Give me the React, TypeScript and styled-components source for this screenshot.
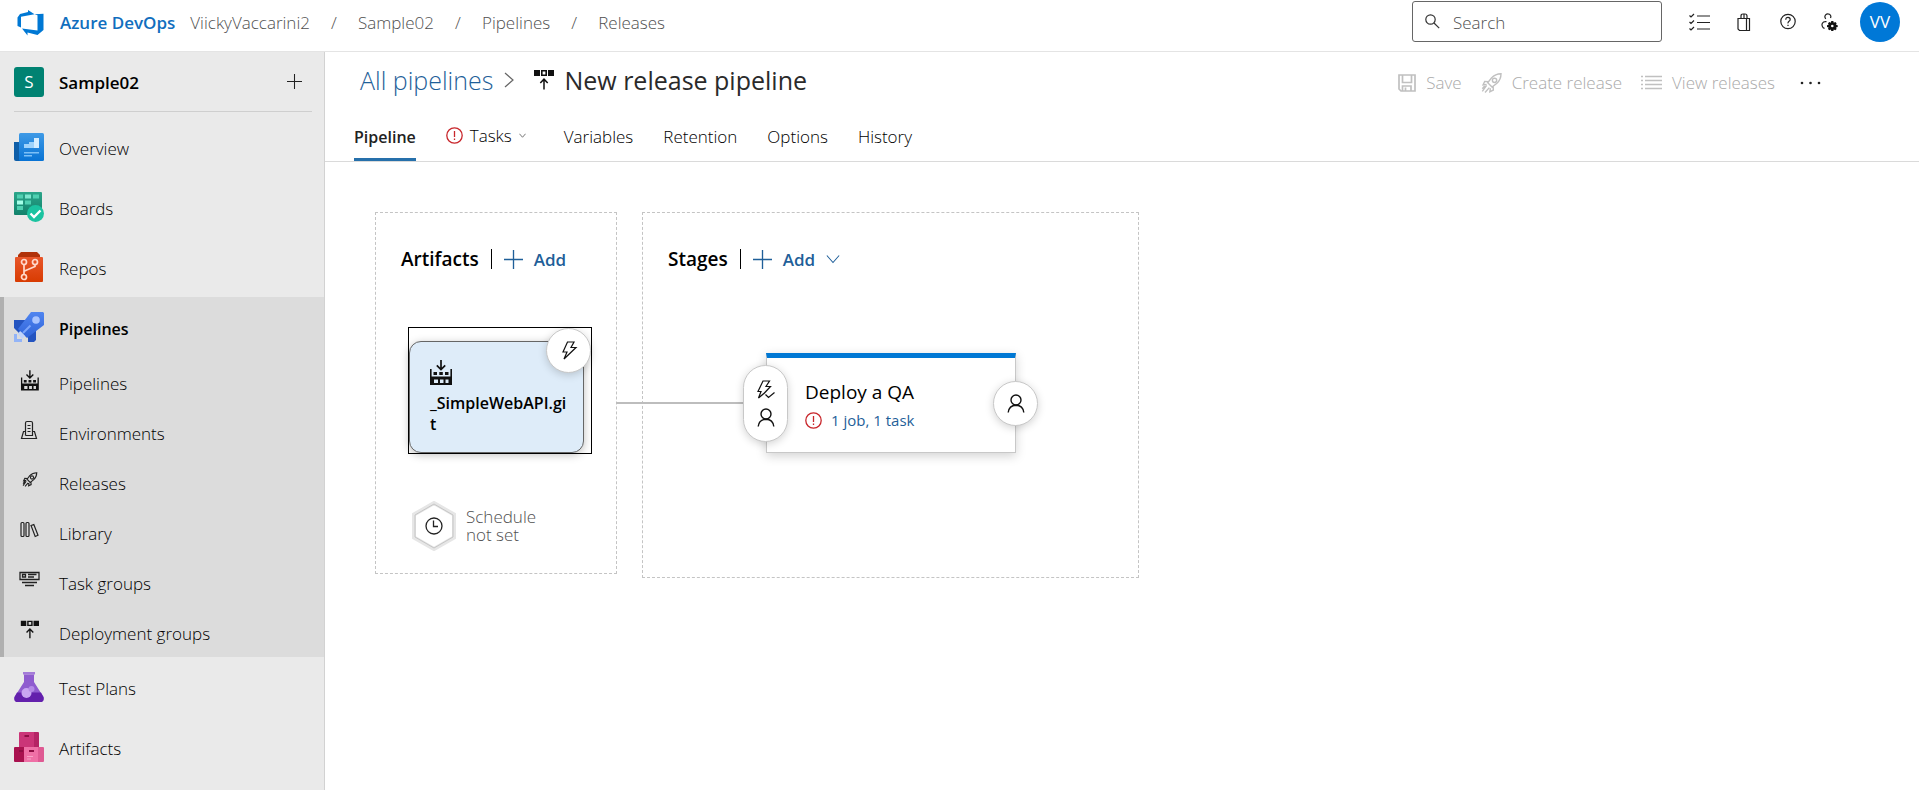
import React from "react";
import styled, { createGlobalStyle, css } from "styled-components";

const font = `"Open Sans", "Noto Sans", sans-serif`;
const link = "#1f5f99";

const GlobalStyle = createGlobalStyle`
  * { box-sizing: border-box; }
  body { margin: 0; background: #fff; color: #000; font-family: ${font}; font-size: 17px; font-weight: 300; }
  a { color: inherit; text-decoration: none; }
  button { border: 0; padding: 0; background: none; font: inherit; color: inherit; cursor: pointer; }
  h1, h2, h3, p, ul { margin: 0; padding: 0; }
  ul { list-style: none; }
  svg { display: block; flex: none; }
`;

const Page = styled.div`
  min-height: 100vh;
  display: flex;
  flex-direction: column;
`;

const TopBar = styled.header`
  display: flex;
  align-items: flex-start;
  justify-content: space-between;
  height: 52px;
  padding: 1px 19px 0 17px;
  border-bottom: 1px solid #e4e4e4;
`;

const Crumbs = styled.nav`
  display: flex;
  align-items: center;
  height: 43px;
  color: #505050;
`;

const Brand = styled.a`
  display: flex;
  align-items: center;
  gap: 16px;
  margin-right: 15px;
  color: #106ebe;
  font-weight: 600;
`;

const Slash = styled.span`
  width: 48px;
  text-align: center;
`;

const TopTools = styled.div`
  display: flex;
  align-items: center;
`;

const SearchBox = styled.label`
  display: flex;
  align-items: center;
  gap: 13px;
  width: 250px;
  height: 41px;
  margin-right: 27px;
  padding: 0 12px;
  border: 1px solid #666;
  border-radius: 3px;
`;

const SearchInput = styled.input`
  width: 100%;
  min-width: 0;
  padding: 2px 0 0;
  border: 0;
  outline: 0;
  background: none;
  font: inherit;
  &::placeholder { color: #505050; opacity: 1; }
`;

const ToolIcons = styled.div`
  display: flex;
  align-items: center;
  gap: 21px;
  margin-right: 22px;
`;

const Avatar = styled.button`
  width: 40px;
  height: 40px;
  border-radius: 50%;
  background: #0078d7;
  color: #fff;
  font-weight: 400;
`;

const Body = styled.div`
  display: flex;
  flex: 1;
`;

const Sidebar = styled.aside`
  flex: none;
  width: 325px;
  background: #eaeaea;
  border-right: 1px solid #d2d2d2;
`;

const Project = styled.div`
  display: flex;
  align-items: center;
  height: 60px;
  margin: 0 12px 5px 14px;
  border-bottom: 1px solid #cfcfcf;
`;

const ProjectTile = styled.span`
  width: 30px;
  height: 30px;
  margin-right: 15px;
  border-radius: 3px;
  background: #008272;
  color: #fff;
  font-weight: 400;
  line-height: 30px;
  text-align: center;
`;

const ProjectName = styled.a`
  flex: 1;
  padding-top: 2px;
  font-weight: 600;
`;

const AddButton = styled.button`
  margin-right: 10px;
`;

const NavGroup = styled.ul<{ $active?: boolean }>`
  ${(p) => p.$active && css`
    background: #dcdcdc;
    box-shadow: inset 4px 0 #b0b0b0;
  `}
`;

const NavItem = styled.a<{ $sub?: boolean; $bold?: boolean }>`
  display: flex;
  align-items: center;
  gap: 15px;
  height: ${(p) => (p.$sub ? 50 : 60)}px;
  padding-left: 14px;
  ${(p) => p.$bold && css`
    font-size: 16px;
    font-weight: 600;
  `}
  span { padding-top: 3px; }
`;

const Main = styled.main`
  flex: 1;
  min-width: 0;
`;

const TitleRow = styled.div`
  display: flex;
  align-items: center;
  justify-content: space-between;
  height: 58px;
  padding: 0 98px 0 35px;
`;

const Title = styled.div`
  display: flex;
  align-items: center;
  padding-bottom: 3px;
  font-size: 25px;
  line-height: 34px;
`;

const TitleLink = styled.a`
  margin-right: 8px;
  color: ${link};
`;

const TitleIcon = styled.span`
  margin: 0 10px 0 17px;
`;

const Heading = styled.h1`
  color: #2a2a2a;
  font-size: 25px;
  font-weight: 400;
`;

const Actions = styled.div`
  display: flex;
  align-items: center;
  gap: 19px;
  padding-top: 3px;
`;

const Action = styled.button`
  display: flex;
  align-items: center;
  gap: 10px;
  color: #222;
  &:disabled { color: #aaa; cursor: default; }
  &:disabled svg { color: #c0c0c0; }
`;

const MoreAction = styled(Action)`
  margin-left: 6px;
`;

const Tabs = styled.nav`
  display: flex;
  gap: 30px;
  height: 52px;
  padding-left: 29px;
  border-bottom: 1px solid #dadada;
`;

const Tab = styled.a<{ $active?: boolean }>`
  display: flex;
  align-items: center;
  gap: 7px;
  padding-top: 5px;
  border-bottom: 3px solid ${(p) => (p.$active ? "#2670ab" : "transparent")};
  ${(p) => p.$active && css`
    color: #222;
    font-size: 16px;
    font-weight: 600;
  `}
`;

const MenuTab = styled(Tab)`
  margin-right: 8px;
  padding-top: 2px;
`;

const Canvas = styled.div`
  display: flex;
  align-items: flex-start;
  gap: 25px;
  padding: 50px;
`;

const Panel = styled.section<{ $width: number; $height: number }>`
  position: relative;
  width: ${(p) => p.$width}px;
  min-height: ${(p) => p.$height}px;
  padding: 36px 25px 22px;
  border: 1px dashed #c4c4c4;
`;

const PanelHead = styled.div`
  display: flex;
  align-items: center;
  height: 20px;
`;

const PanelTitle = styled.h2`
  padding-right: 12px;
  font-size: 19px;
  font-weight: 600;
`;

const AddLink = styled.button`
  display: flex;
  align-items: center;
  gap: 11px;
  height: 20px;
  padding-left: 12px;
  border-left: 1px solid #000;
  color: ${link};
  font-size: 17px;
  font-weight: 600;
`;

const Selection = styled.div`
  position: relative;
  width: 184px;
  margin: 58px 0 0 7px;
  padding: 13px 7px 0 0;
  border: 1px solid #000;
`;

const ArtifactCard = styled.div`
  height: 112px;
  padding: 18px 14px 0 20px;
  border: 1px solid #666;
  border-radius: 12px;
  background: #deecf9;
  box-shadow: 0 2px 8px rgba(0, 0, 0, 0.25);
`;

const ArtifactName = styled.h3`
  margin-top: 8px;
  font-size: 16px;
  font-weight: 600;
  line-height: 21px;
  word-break: break-all;
`;

const Round = styled.button<{ $tall?: boolean }>`
  position: absolute;
  display: flex;
  flex-direction: column;
  align-items: center;
  justify-content: center;
  gap: 9px;
  width: 45px;
  height: ${(p) => (p.$tall ? 77 : 45)}px;
  border: 1px solid #c8c8c8;
  border-radius: 23px;
  background: #fff;
  box-shadow: 0 2px 8px rgba(0, 0, 0, 0.18);
`;

const TriggerRound = styled(Round)`
  top: 0;
  right: 0;
`;

const PreRound = styled(Round)`
  left: -24px;
  top: 7px;
`;

const PostRound = styled(Round)`
  right: -23px;
  top: 23px;
`;

const Schedule = styled.button`
  display: flex;
  align-items: center;
  gap: 10px;
  margin: 47px 0 0 11px;
  color: #505050;
  font-size: 17px;
  line-height: 18px;
  text-align: left;
`;

const ScheduleText = styled.span`
  width: 76px;
`;

const Connector = styled.span`
  position: absolute;
  z-index: 1;
  left: 100%;
  top: 189px;
  width: 128px;
  height: 2px;
  background: #bdbdbd;
`;

const StageCard = styled.div`
  position: relative;
  z-index: 2;
  width: 250px;
  height: 100px;
  margin: 84px 0 0 98px;
  padding: 21px 38px 0;
  border: 1px solid #c8c8c8;
  border-top: 5px solid #0078d4;
  background: #fff;
  box-shadow: 0 3px 10px rgba(0, 0, 0, 0.18);
`;

const StageName = styled.h3`
  font-size: 19px;
  font-weight: 400;
  line-height: 26px;
`;

const StageLink = styled.a`
  display: flex;
  align-items: center;
  gap: 9px;
  margin-top: 3px;
  color: ${link};
  font-size: 15px;
  font-weight: 400;
  line-height: 24px;
`;

const AzureLogo = () => (
  <svg width="27" height="26" viewBox="0 0 27 26" fill="#0078d4">
    <path d="M.5 7.500 3 4 11 2V0L17.500 4.300 4 6.800V17.500L.5 16Z" />
    <path d="M17.500 4.300 26.500 3.700V20L20.500 25 10.500 22.500V25.500L5 18.500 20.500 20.500V5.200Z" />
  </svg>
);

const Plus = ({ size = 15, color = "#222" }: { size?: number; color?: string }) => (
  <svg width={size} height={size} viewBox="0 0 20 20" fill="none" stroke={color} strokeWidth="1.400">
    <path d="M10 0V20M0 10H20" />
  </svg>
);

const Chevron = ({ size, color = "#666", right }: { size: number; color?: string; right?: boolean }) => (
  <svg width={size} height={size} viewBox="0 0 16 16" fill="none" stroke={color} strokeWidth={size < 10 ? 2 : 1.2}>
    <path d={right ? "M4 1 12 8 4 15" : "M1 4 8 12 15 4"} />
  </svg>
);

const Alert = () => (
  <svg width="17" height="17" viewBox="0 0 17 17" fill="none" stroke="#c8262b" strokeWidth="1.300">
    <circle cx="8.500" cy="8.500" r="7.700" />
    <path d="M8.500 4V10M8.500 11.400V12.900" />
  </svg>
);

const SearchIcon = () => (
  <svg width="15" height="15" viewBox="0 0 15 15" fill="none" stroke="#333" strokeWidth="1.200">
    <circle cx="5.500" cy="5.500" r="4.700" />
    <path d="M9 9 14.200 14.200" />
  </svg>
);

const Checklist = () => (
  <svg width="21" height="18" viewBox="0 0 21 18" fill="none" stroke="#222" strokeWidth="1.200">
    <path d="M8 3H21M8 9.500H21M8 16H21M.5 2.500 2 4 5 1M.5 9 2 10.500 5 7.500M.5 15.500 2 17 5 14" />
  </svg>
);

const Bag = () => (
  <svg width="24" height="20" viewBox="0 0 24 20" fill="none" stroke="#222" strokeWidth="1.200">
    <path d="M7 6.500H18.500V18.500H8.500L7 17ZM15.500 6.500V18.500M10 6.500V4Q10 2 12 2H14Q16 2 16 4V6.500M13 2V6.500" />
  </svg>
);

const Help = () => (
  <svg width="24" height="17" viewBox="0 0 24 17" fill="none" stroke="#222" strokeWidth="1.200">
    <circle cx="12" cy="8.500" r="7.200" />
    <path d="M9.800 6.700Q9.800 4.300 12 4.300T14.200 6.400Q14.200 7.500 13 8.300T12 10.300M12 11.700V13" />
  </svg>
);

const UserGear = () => (
  <svg width="17" height="18" viewBox="0 0 17 18">
    <g fill="none" stroke="#222" strokeWidth="1.200">
      <path d="M4.800 5.800A2.900 2.900 0 1 1 9.500 5M5.500 8.700Q2.500 8.200 1.400 10.200T2 14.500L3.500 15.500" />
    </g>
    <path fill="#111" d="M10.300 8H12.300L12.800 9.700 14.300 8.900 15.600 10.200 15 11.700 16.700 12.200V14L15 14.400 15.600 16 14.300 17.200 12.800 16.400 12.300 18H10.300L9.800 16.400 8.300 17.200 7 16 7.600 14.400 6 14V12.200L7.600 11.700 7 10.200 8.300 8.900 9.800 9.700Z" />
    <circle cx="11.300" cy="13" r="1.300" fill="#fff" />
  </svg>
);

const OverviewIcon = () => (
  <svg width="30" height="30" viewBox="0 0 30 30">
    <defs>
      <linearGradient id="ov" x1="0" y1="0" x2="0" y2="1">
        <stop stopColor="#3f9ae6" /><stop offset="1" stopColor="#0873d4" />
      </linearGradient>
    </defs>
    <path fill="#0e5ea8" d="M0 10H7V29H2Q0 29 0 27Z" />
    <rect x="5" y="1" width="25" height="28" rx="1.500" fill="url(#ov)" />
    <path fill="#9fd3fb" d="M10 12H15V10H20V6H25V16H10Z" />
    <path fill="#d5edff" d="M20 6H25V16H20Z" />
    <path fill="#7cc0f7" d="M10 20H25V21.500H10ZM10 23H18V24.500H10Z" />
  </svg>
);

const BoardsIcon = () => (
  <svg width="30" height="30" viewBox="0 0 30 30">
    <defs>
      <linearGradient id="bd" x1="0" y1="0" x2="0" y2="1">
        <stop stopColor="#2ba58a" /><stop offset="1" stopColor="#12826b" />
      </linearGradient>
    </defs>
    <rect width="28" height="23" rx="1" fill="url(#bd)" />
    <path fill="#4fd0b1" d="M3 2.500H9V6.500H3ZM19 2.500H25V6.500H19ZM3 14H9V18H3ZM11 8.500H17V12.500H11Z" />
    <path fill="#7de6cf" d="M11 2.500H17V6.500H11Z" />
    <path fill="#a5ffe9" d="M3 8.500H9V12.500H3Z" />
    <circle cx="21.500" cy="21.500" r="8.500" fill="#1bc3a0" />
    <path d="M16.500 21.500 20 25 26.500 18.500" fill="none" stroke="#fff" strokeWidth="2.400" />
  </svg>
);

const ReposIcon = () => (
  <svg width="30" height="30" viewBox="0 0 30 30">
    <defs>
      <linearGradient id="rp" x1="0" y1="0" x2="0" y2="1">
        <stop stopColor="#e8572b" /><stop offset="1" stopColor="#d83b01" />
      </linearGradient>
    </defs>
    <path fill="#b0320a" d="M7 0H23L26 3V7H4V3Z" />
    <rect x="1" y="5" width="28" height="25" rx="1" fill="url(#rp)" />
    <g fill="none" stroke="#ffd9cb" strokeWidth="1.700">
      <circle cx="10" cy="10" r="2.500" /><circle cx="21" cy="10" r="2.500" /><circle cx="10" cy="25" r="2.500" />
      <path d="M10 12.500V22.500M21 12.500V14.500L10.500 19" />
    </g>
  </svg>
);

const PipelinesIcon = () => (
  <svg width="30" height="30" viewBox="0 0 30 30">
    <defs>
      <linearGradient id="pl" x1="0" y1="0" x2="0" y2="1">
        <stop stopColor="#5085f0" /><stop offset="1" stopColor="#2f63d8" />
      </linearGradient>
    </defs>
    <path fill="#2454c0" d="M0 8H13V13L5 21 0 16ZM14 24 22 17V28L20 30H14Z" />
    <path fill="url(#pl)" d="M17 0H29L30 1V13L13 26 4 17Z" />
    <circle cx="22" cy="8" r="3.800" fill="#a9c4ff" />
    <path d="M16.500 13.500 9 21" stroke="#7ba5fb" strokeWidth="2" />
    <path fill="#c0d3fb" d="M6 19 11 24 8 27 4 22Z" />
    <path fill="#93b4f7" d="M0 22H3V27H8V30H0Z" />
  </svg>
);

const TestPlansIcon = () => (
  <svg width="30" height="30" viewBox="0 0 30 30">
    <path fill="#a47bd8" d="M9 0H21V2.500H9Z" />
    <path fill="#8f5ccf" d="M10 2.500H20V10L29.500 25Q30.500 30 26 30H4Q-.5 30 .5 25L10 10Z" />
    <path fill="#6320ac" d="M3 20.500H27L29.500 25Q30.500 30 26 30H4Q-.5 30 .5 25Z" />
    <circle cx="12.500" cy="21" r="5" fill="#c9a6f2" /><circle cx="17.500" cy="17" r="3" fill="#b48ae6" />
  </svg>
);

const ArtifactsIcon = () => (
  <svg width="30" height="30" viewBox="0 0 30 30">
    <path fill="#cb3578" d="M5 1Q5 0 6 0H20V15H5Z" />
    <path fill="#b52465" d="M20 0H24Q25 0 25 1V15H20Z" />
    <path fill="#a9124f" d="M0 16Q0 15 1 15H10V30H1Q0 30 0 29Z" />
    <path fill="#ef70a6" d="M10 15H26V30H10Z" />
    <path fill="#df5a93" d="M24 15H29Q30 15 30 16V29Q30 30 29 30H24Z" />
    <path fill="#8f0e44" d="M10.500 3H15V5H10.500ZM5 18H9V20H5ZM15 18H20V20H15Z" />
    <path fill="#f7a3c6" d="M13 24H19V25H13ZM13 26.500H17V27.500H13Z" />
  </svg>
);

const BuildGlyph = ({ small }: { small?: boolean }) => (
  <svg width={small ? 30 : 22} height={small ? 30 : 25} viewBox={small ? "-8.600 -4 37 37" : "0 0 22 25"}>
    <path d="M11 0V9M6.800 5.300 11 9.500 15.200 5.300" fill="none" stroke="#111" strokeWidth="1.700" />
    <path fill="#111" fillRule="evenodd" d="M0 9H1.600V16.500H20.400V9H22V25H0ZM4 19.500V23H8V19.500ZM10 19.500V23H13.500V19.500ZM15.500 19.500V23H18.500V19.500ZM3.500 12H7V15H3.500ZM9.300 12H12.800V15H9.300ZM15 12H18.500V15H15Z" />
  </svg>
);

const EnvIcon = () => (
  <svg width="30" height="30" viewBox="0 0 30 30" fill="none" stroke="#222" strokeWidth="1.200">
    <path d="M11.500 18.500V6Q11.500 4.500 13 4.500H17Q18.500 4.500 18.500 6V18.500H11.500M11.500 14.500H9.500L7.500 21.500H22.500L20.500 14.500H18.500M13.500 8.500H16.500M13.500 11.500H16.500M13.500 14.500H16.500" />
  </svg>
);

const RocketShape = () => (
  <>
    <path d="M6 9 9.500 4.500Q13 .8 18.300 .7 18.300 6 14.500 9.500L10 13ZM6.800 8 3.200 7.800 1.700 11 5 10.500M11 12.200 11.200 15.800 8 17.300 8.500 14M5 11.500 1 17M7.500 13.500 3.500 18M3.500 11.500 1 14.500" />
    <circle cx="12.300" cy="6.800" r="2" />
  </>
);

const ReleaseIcon = () => (
  <svg width="30" height="30" viewBox="-10.500 -6.500 38 38" fill="none" stroke="#222" strokeWidth="1.400">
    <RocketShape />
  </svg>
);

const LibraryIcon = () => (
  <svg width="30" height="30" viewBox="0 0 30 30" fill="none" stroke="#222" strokeWidth="1.200">
    <rect x="7" y="5.500" width="3" height="14" rx="1" />
    <rect x="12" y="5.500" width="3" height="14" rx="1" />
    <path d="M17 8.500 19.800 7.600 24 18.300 21.200 19.500Z" />
  </svg>
);

const TaskGroupIcon = () => (
  <svg width="30" height="30" viewBox="0 0 30 30" fill="none" stroke="#222" strokeWidth="1.300">
    <path d="M6 5.500H25V12.500H6ZM8.500 7.500H11.500V10H8.500ZM14 7.500H22.500M14 10H20M8 15.500H23M11 18.500H20" />
  </svg>
);

const DeployIcon = ({ small }: { small?: boolean }) => (
  <svg width={small ? 30 : 20} height={small ? 30 : 20} viewBox={small ? "-7.500 -4 33 33" : "0 0 20 20"}>
    <path fill="#111" fillRule="evenodd" d="M0 0H6V6H0ZM14 0H20V6H14ZM7 0H13V6H7ZM8.600 1.600V4.400H11.400V1.600Z" />
    <path fill="none" stroke="#111" strokeWidth="1.500" d="M10 19.500V9.500M6.300 13 10 9.200 13.700 13" />
  </svg>
);

const SaveIcon = () => (
  <svg width="18" height="18" viewBox="0 0 18 18" fill="none" stroke="currentColor" strokeWidth="1.700">
    <path d="M1 1H17V17H3L1 15ZM4.500 1V8.500H13.500V1M4.500 17V12H13V17M7.500 13.500V17" />
  </svg>
);

const RocketAction = () => (
  <svg width="21" height="20" viewBox="0 0 19 18.500" fill="none" stroke="currentColor" strokeWidth="1.300">
    <RocketShape />
  </svg>
);

const ListIcon = () => (
  <svg width="21" height="15" viewBox="0 0 21 15" fill="none" stroke="currentColor" strokeWidth="1.300">
    <path d="M4 1.500H21M4 5.500H21M4 9.500H21M4 13.500H21M0 1.500H2M0 5.500H2M0 9.500H2M0 13.500H2" />
  </svg>
);

const Dots = () => (
  <svg width="21" height="4" viewBox="0 0 21 4" fill="#222">
    <circle cx="2" cy="2" r="1.300" /><circle cx="10.500" cy="2" r="1.300" /><circle cx="19" cy="2" r="1.300" />
  </svg>
);

const Bolt = ({ check }: { check?: boolean }) => (
  <svg width="18" height="19" viewBox="0 0 18 19" fill="none" stroke="#111" strokeWidth="1.200">
    {check ? (
      <path d="M8 12.500 1.500 18 4 11.500H1L6 1H12.500L9 6.500H13.500L6.500 14M8.500 14.500 11.500 17.500 17.500 12.500" />
    ) : (
      <path d="M7.500 1H14L11 6.500H16L4 18 7 11H3Z" />
    )}
  </svg>
);

const Person = () => (
  <svg width="18" height="19" viewBox="0 0 18 19" fill="none" stroke="#111" strokeWidth="1.400">
    <circle cx="9" cy="6" r="5" />
    <path d="M1.200 18.500Q2 11.500 9 11.300 16 11.500 16.800 18.500" />
  </svg>
);

const ClockHex = () => (
  <svg width="44" height="50" viewBox="0 0 44 50" fill="none">
    <path d="M22 2 42 13.500V36.500L22 48 2 36.500V13.500Z" fill="#fff" stroke="#e6e6e6" strokeWidth="4" />
    <path d="M22 3 41 14V36L22 47 3 36V14Z" stroke="#c6c6c6" />
    <circle cx="22" cy="25" r="8" stroke="#222" strokeWidth="1.300" />
    <path d="M21.500 19.500V25.500H26" stroke="#222" strokeWidth="1.300" />
  </svg>
);

const topNav = [
  { label: "Overview", icon: <OverviewIcon /> },
  { label: "Boards", icon: <BoardsIcon /> },
  { label: "Repos", icon: <ReposIcon /> },
];
const subNav = [
  { label: "Pipelines", icon: <BuildGlyph small /> },
  { label: "Environments", icon: <EnvIcon /> },
  { label: "Releases", icon: <ReleaseIcon /> },
  { label: "Library", icon: <LibraryIcon /> },
  { label: "Task groups", icon: <TaskGroupIcon /> },
  { label: "Deployment groups", icon: <DeployIcon small /> },
];
const bottomNav = [
  { label: "Test Plans", icon: <TestPlansIcon /> },
  { label: "Artifacts", icon: <ArtifactsIcon /> },
];

const Items = ({ items, sub }: { items: typeof topNav; sub?: boolean }) => (
  <>
    {items.map((item) => (
      <li key={item.label}>
        <NavItem href="#" $sub={sub}>{item.icon}<span>{item.label}</span></NavItem>
      </li>
    ))}
  </>
);

export default function App() {
  return (
    <Page>
      <GlobalStyle />
      <TopBar>
        <Crumbs>
          <Brand href="#"><AzureLogo />Azure DevOps</Brand>
          <a href="#">ViickyVaccarini2</a>
          <Slash>/</Slash>
          <a href="#">Sample02</a>
          <Slash>/</Slash>
          <a href="#">Pipelines</a>
          <Slash>/</Slash>
          <a href="#">Releases</a>
        </Crumbs>
        <TopTools>
          <SearchBox>
            <SearchIcon />
            <SearchInput type="search" placeholder="Search" aria-label="Search" />
          </SearchBox>
          <ToolIcons>
            <button aria-label="Work items"><Checklist /></button>
            <button aria-label="Marketplace"><Bag /></button>
            <button aria-label="Help"><Help /></button>
            <button aria-label="User settings"><UserGear /></button>
          </ToolIcons>
          <Avatar>VV</Avatar>
        </TopTools>
      </TopBar>
      <Body>
        <Sidebar>
          <Project>
            <ProjectTile>S</ProjectTile>
            <ProjectName href="#">Sample02</ProjectName>
            <AddButton aria-label="Add to project"><Plus /></AddButton>
          </Project>
          <NavGroup><Items items={topNav} /></NavGroup>
          <NavGroup $active>
            <li><NavItem href="#" $bold><PipelinesIcon /><span>Pipelines</span></NavItem></li>
            <Items items={subNav} sub />
          </NavGroup>
          <NavGroup><Items items={bottomNav} /></NavGroup>
        </Sidebar>
        <Main>
          <TitleRow>
            <Title>
              <TitleLink href="#">All pipelines</TitleLink>
              <Chevron size={16} right />
              <TitleIcon><DeployIcon /></TitleIcon>
              <Heading>New release pipeline</Heading>
            </Title>
            <Actions>
              <Action disabled><SaveIcon />Save</Action>
              <Action disabled><RocketAction />Create release</Action>
              <Action disabled><ListIcon />View releases</Action>
              <MoreAction aria-label="More actions"><Dots /></MoreAction>
            </Actions>
          </TitleRow>
          <Tabs>
            <Tab href="#" $active>Pipeline</Tab>
            <MenuTab href="#"><Alert />Tasks<Chevron size={7} /></MenuTab>
            <Tab href="#">Variables</Tab>
            <Tab href="#">Retention</Tab>
            <Tab href="#">Options</Tab>
            <Tab href="#">History</Tab>
          </Tabs>
          <Canvas>
            <Panel $width={242} $height={362}>
              <PanelHead>
                <PanelTitle>Artifacts</PanelTitle>
                <AddLink><Plus size={19} color={link} />Add</AddLink>
              </PanelHead>
              <Selection>
                <ArtifactCard>
                  <BuildGlyph />
                  <ArtifactName>_SimpleWebAPI.git</ArtifactName>
                </ArtifactCard>
                <TriggerRound aria-label="Continuous deployment trigger"><Bolt /></TriggerRound>
              </Selection>
              <Schedule><ClockHex /><ScheduleText>Schedule not set</ScheduleText></Schedule>
              <Connector />
            </Panel>
            <Panel $width={497} $height={366}>
              <PanelHead>
                <PanelTitle>Stages</PanelTitle>
                <AddLink><Plus size={19} color={link} />Add<Chevron size={14} color={link} /></AddLink>
              </PanelHead>
              <StageCard>
                <PreRound $tall aria-label="Pre-deployment conditions"><Bolt check /><Person /></PreRound>
                <StageName>Deploy a QA</StageName>
                <StageLink href="#"><Alert />1 job, 1 task</StageLink>
                <PostRound aria-label="Post-deployment conditions"><Person /></PostRound>
              </StageCard>
            </Panel>
          </Canvas>
        </Main>
      </Body>
    </Page>
  );
}
